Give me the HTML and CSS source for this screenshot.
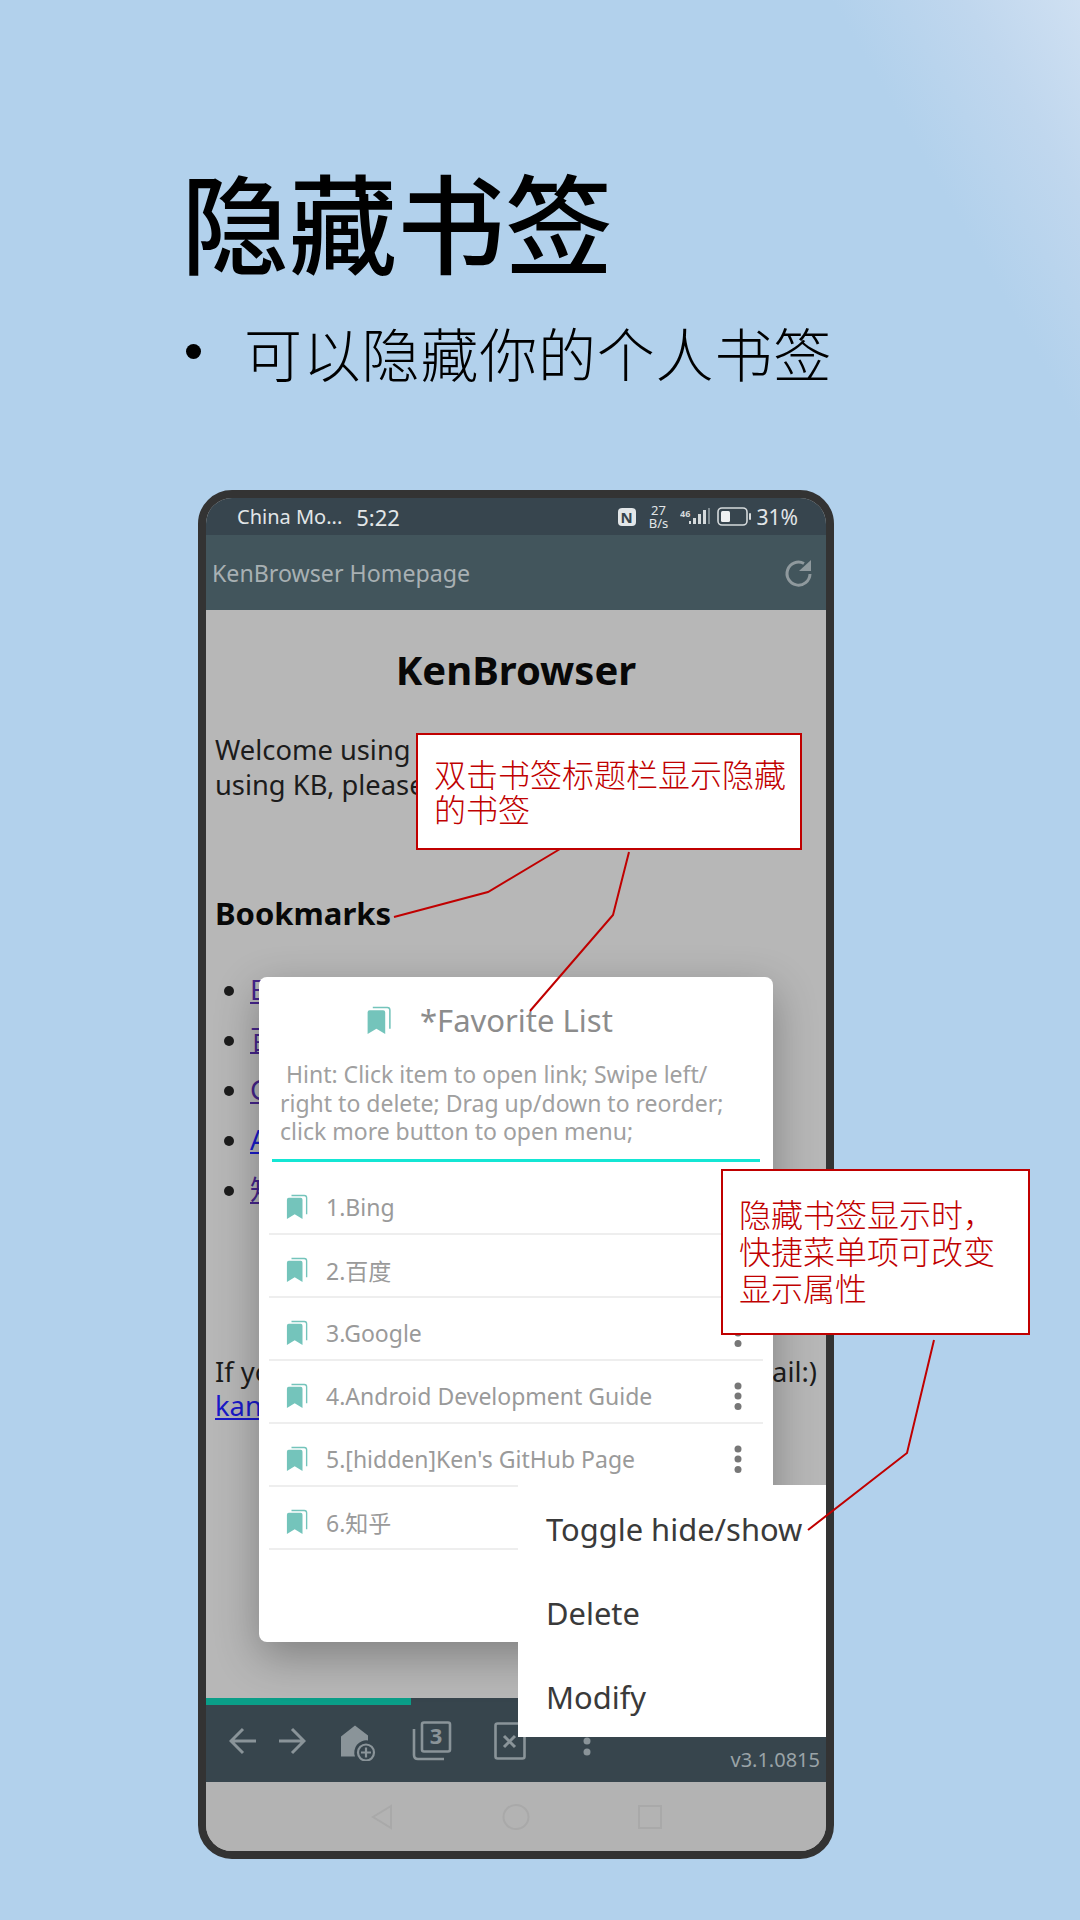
FILE: index.html
```html
<!DOCTYPE html>
<html lang="zh-CN">
<head>
    <meta charset="UTF-8">
    <meta name="viewport" content="width=device-width, initial-scale=1.0">
    <title>隐藏书签</title>
    <link rel="stylesheet" href="styles.css">
</head>
<body>
    <div class="slide">
        <header class="intro">
            <h1 class="intro-title">隐藏书签</h1>
            <ul class="intro-points">
                <li>可以隐藏你的个人书签</li>
            </ul>
        </header>

        <div class="phone">
            <div class="status-bar">
                <span class="carrier">China Mo...</span>
                <span class="clock">5:22</span>
                <div class="status-icons">
                    <span class="nfc">N</span>
                    <span class="speed">27<br>B/s</span>
                    <svg class="signal" width="30" height="20" viewBox="0 0 30 20">
                        <text x="0" y="10" class="signal-text">46</text>
                        <rect x="9" y="14" width="2" height="3" fill="#d5dadc"/>
                        <rect x="13" y="11" width="3" height="6" fill="#d5dadc"/>
                        <rect x="18" y="7" width="3" height="10" fill="#d5dadc"/>
                        <rect x="23" y="3" width="3" height="14" fill="#d5dadc"/>
                        <rect x="28" y="1" width="2" height="16" fill="#7e8a90"/>
                    </svg>
                    <svg class="battery" width="35" height="19" viewBox="0 0 35 19">
                        <rect x="1" y="1" width="29" height="17" rx="4" fill="none" stroke="#d5dadc" stroke-width="1.6"/>
                        <rect x="4" y="4" width="9" height="11" rx="1.5" fill="#eef0f1"/>
                        <rect x="32" y="6" width="2" height="7" rx="1" fill="#d5dadc"/>
                    </svg>
                    <span class="battery-text">31%</span>
                </div>
            </div>

            <div class="app-bar">
                <span class="app-title">KenBrowser Homepage</span>
                <svg width="30" height="30" viewBox="0 0 30 30">
                    <path d="M26 16 A11.5 11.5 0 1 1 20 5.5" fill="none" stroke="#8f999d" stroke-width="3"/>
                    <path d="M27 2 V13 H15 Z" fill="#8f999d"/>
                </svg>
            </div>

            <main class="web">
                <h2 class="web-title">KenBrowser</h2>
                <p class="web-welcome">Welcome using<br>using KB, please</p>
                <h3 class="web-heading">Bookmarks</h3>
                <ul class="web-links">
                    <li><a class="visited" href="#">B</a></li>
                    <li><a class="visited" href="#">百</a></li>
                    <li><a class="visited" href="#">G</a></li>
                    <li><a href="#">A</a></li>
                    <li><a class="visited" href="#">知</a></li>
                </ul>
                <p class="web-contact"><span>If yo</span><span>ail:)</span></p>
                <a class="web-mail" href="#">kan</a>
            </main>

            <div class="bottom-bar">
                <div class="progress"></div>
                <div class="tools">
                    <svg class="tool-back" width="28" height="28" viewBox="0 0 28 28">
                        <path d="M27 14 H2 M14 2 L2 14 L14 26" fill="none" stroke="#8a9499" stroke-width="3"/>
                    </svg>
                    <svg class="tool-forward" width="28" height="28" viewBox="0 0 28 28">
                        <path d="M1 14 H26 M14 2 L26 14 L14 26" fill="none" stroke="#8a9499" stroke-width="3"/>
                    </svg>
                    <svg class="tool-home" width="36" height="40" viewBox="0 -4.5 36 40">
                        <path d="M1 11 L15 0 L28 10 V15 A12 12 0 0 0 15 31 H1 Z" fill="#8a9499"/>
                        <circle cx="26" cy="27" r="8" fill="none" stroke="#8a9499" stroke-width="2.2"/>
                        <path d="M26 22 V32 M21 27 H31" stroke="#8a9499" stroke-width="2.2"/>
                    </svg>
                    <svg class="tool-tabs" width="40" height="40" viewBox="0 0 40 40">
                        <rect x="10" y="1.5" width="28" height="29" rx="2" fill="none" stroke="#8a9499" stroke-width="2.6"/>
                        <path d="M2 8 V34 Q2 38 6 38 H32" fill="none" stroke="#8a9499" stroke-width="2.6"/>
                        <text x="24" y="23" class="tool-count">3</text>
                    </svg>
                    <svg class="tool-close" width="32" height="38" viewBox="0 0 32 38">
                        <rect x="1.5" y="1.5" width="29" height="35" rx="2" fill="none" stroke="#8a9499" stroke-width="2.6"/>
                        <path d="M10 14 L21 25 M21 14 L10 25" stroke="#8a9499" stroke-width="3"/>
                    </svg>
                    <svg class="tool-more" width="12" height="32" viewBox="0 0 12 32">
                        <circle cx="6" cy="5" r="3.5" fill="#8a9499"/>
                        <circle cx="6" cy="16" r="3.5" fill="#8a9499"/>
                        <circle cx="6" cy="27" r="3.5" fill="#8a9499"/>
                    </svg>
                    <span class="version">v3.1.0815</span>
                </div>
            </div>

            <div class="nav-bar">
                <svg width="22" height="26" viewBox="0 0 22 26"><path d="M20 2 V24 L2 13 Z" fill="none" stroke="#a9a9a9" stroke-width="2"/></svg>
                <svg width="28" height="26" viewBox="0 0 28 26"><ellipse cx="14" cy="13" rx="12.5" ry="12" fill="none" stroke="#a9a9a9" stroke-width="2"/></svg>
                <svg width="24" height="24" viewBox="0 0 24 24"><rect x="1" y="1" width="22" height="22" fill="none" stroke="#a9a9a9" stroke-width="2"/></svg>
            </div>

            <section class="dialog">
                <div class="dialog-head">
                    <svg width="26" height="29" viewBox="0 0 24 28">
                        <path d="M1 6 Q1 4 3 4 H16 Q18 4 18 6 V27 L9.5 22 L1 27 Z" fill="#74c4bb"/>
                        <path d="M6 1.5 H20 Q22.5 1.5 22.5 4 V22" fill="none" stroke="#74c4bb" stroke-width="1.5"/>
                    </svg>
                    <span class="dialog-title">*Favorite List</span>
                </div>
                <p class="dialog-hint">&nbsp;Hint: Click item to open link; Swipe left/<br>right to delete; Drag up/down to reorder;<br>click more button to open menu;</p>
                <div class="dialog-rule"></div>
                <ul class="fav-list">
                    <li class="fav-item">
                        <svg width="22" height="26" viewBox="0 0 24 28"><path d="M1 6 Q1 4 3 4 H16 Q18 4 18 6 V27 L9.5 22 L1 27 Z" fill="#74c4bb"/><path d="M6 1.5 H20 Q22.5 1.5 22.5 4 V22" fill="none" stroke="#74c4bb" stroke-width="1.5"/></svg>
                        <span class="fav-name">1.Bing</span>
                    </li>
                    <li class="fav-item">
                        <svg width="22" height="26" viewBox="0 0 24 28"><path d="M1 6 Q1 4 3 4 H16 Q18 4 18 6 V27 L9.5 22 L1 27 Z" fill="#74c4bb"/><path d="M6 1.5 H20 Q22.5 1.5 22.5 4 V22" fill="none" stroke="#74c4bb" stroke-width="1.5"/></svg>
                        <span class="fav-name">2.百度</span>
                    </li>
                    <li class="fav-item">
                        <svg width="22" height="26" viewBox="0 0 24 28"><path d="M1 6 Q1 4 3 4 H16 Q18 4 18 6 V27 L9.5 22 L1 27 Z" fill="#74c4bb"/><path d="M6 1.5 H20 Q22.5 1.5 22.5 4 V22" fill="none" stroke="#74c4bb" stroke-width="1.5"/></svg>
                        <span class="fav-name">3.Google</span>
                        <svg class="fav-more" width="8" height="28" viewBox="0 0 8 28"><circle cx="4" cy="4" r="3.5"/><circle cx="4" cy="14" r="3.5"/><circle cx="4" cy="24.5" r="3.5"/></svg>
                    </li>
                    <li class="fav-item">
                        <svg width="22" height="26" viewBox="0 0 24 28"><path d="M1 6 Q1 4 3 4 H16 Q18 4 18 6 V27 L9.5 22 L1 27 Z" fill="#74c4bb"/><path d="M6 1.5 H20 Q22.5 1.5 22.5 4 V22" fill="none" stroke="#74c4bb" stroke-width="1.5"/></svg>
                        <span class="fav-name">4.Android Development Guide</span>
                        <svg class="fav-more" width="8" height="28" viewBox="0 0 8 28"><circle cx="4" cy="4" r="3.5"/><circle cx="4" cy="14" r="3.5"/><circle cx="4" cy="24.5" r="3.5"/></svg>
                    </li>
                    <li class="fav-item">
                        <svg width="22" height="26" viewBox="0 0 24 28"><path d="M1 6 Q1 4 3 4 H16 Q18 4 18 6 V27 L9.5 22 L1 27 Z" fill="#74c4bb"/><path d="M6 1.5 H20 Q22.5 1.5 22.5 4 V22" fill="none" stroke="#74c4bb" stroke-width="1.5"/></svg>
                        <span class="fav-name">5.[hidden]Ken's GitHub Page</span>
                        <svg class="fav-more" width="8" height="28" viewBox="0 0 8 28"><circle cx="4" cy="4" r="3.5"/><circle cx="4" cy="14" r="3.5"/><circle cx="4" cy="24.5" r="3.5"/></svg>
                    </li>
                    <li class="fav-item">
                        <svg width="22" height="26" viewBox="0 0 24 28"><path d="M1 6 Q1 4 3 4 H16 Q18 4 18 6 V27 L9.5 22 L1 27 Z" fill="#74c4bb"/><path d="M6 1.5 H20 Q22.5 1.5 22.5 4 V22" fill="none" stroke="#74c4bb" stroke-width="1.5"/></svg>
                        <span class="fav-name">6.知乎</span>
                    </li>
                </ul>
            </section>

            <div class="menu">
                <div class="menu-item">Toggle hide/show</div>
                <div class="menu-item">Delete</div>
                <div class="menu-item">Modify</div>
            </div>
        </div>

        <svg class="leaders" width="1080" height="1920" viewBox="0 0 1080 1920">
            <polyline points="394,917 488,892 560,849"/>
            <polyline points="629,852 613,915 530,1011"/>
            <polyline points="934,1340 907,1453 808,1530"/>
        </svg>

        <div class="note note-top">双击书签标题栏显示隐藏的书签</div>
        <div class="note note-side">隐藏书签显示时，快捷菜单项可改变显示属性</div>
    </div>
</body>
</html>
```

FILE: styles.css
```css
* {
    box-sizing: border-box;
}

body {
    margin: 0;
    font-family: "Noto Sans", "Noto Sans CJK SC", sans-serif;
}

.slide {
    position: relative;
    width: 1080px;
    height: 1920px;
    overflow: hidden;
    padding: 154px 0 0 181px;
    background: linear-gradient(240deg, #cfe0f2 0, #c0d7ee 100px, #b2d1ec 215px);
}

/* heading above the phone */
.intro-title {
    margin: 0;
    font-family: "Noto Sans CJK SC", sans-serif;
    font-size: 108px;
    font-weight: 500;
    line-height: 130px;
    color: #000;
}

.intro-points {
    margin: 0;
    padding: 0;
    list-style: none;
}

.intro-points li {
    position: relative;
    margin-top: 30px;
    padding-left: 63px;
    font-family: "Noto Sans CJK SC", sans-serif;
    font-size: 58px;
    font-weight: 300;
    letter-spacing: 0.8px;
    line-height: 76px;
    color: #000;
}

.intro-points li::before {
    content: "";
    position: absolute;
    left: 5px;
    top: 30px;
    width: 15px;
    height: 15px;
    border-radius: 50%;
    background: #000;
}

/* phone */
.phone {
    position: relative;
    display: flex;
    flex-direction: column;
    width: 636px;
    height: 1369px;
    margin: 100px 0 0 17px;
    border: 8px solid #333;
    border-radius: 34px;
    overflow: hidden;
    background: #b7b7b7;
}

.status-bar {
    display: flex;
    align-items: center;
    height: 37px;
    padding: 0 28px 0 31px;
    background: #37454e;
    color: #e2e6e8;
}

.carrier {
    font-size: 20px;
}

.clock {
    margin-left: 14px;
    font-size: 22px;
}

.status-icons {
    display: flex;
    align-items: center;
    margin-left: auto;
}

.nfc {
    width: 18px;
    height: 18px;
    border-radius: 4px;
    background: #e2e6e8;
    color: #37454e;
    font-size: 15px;
    font-weight: 700;
    line-height: 18px;
    text-align: center;
}

.speed {
    width: 24px;
    margin-left: 11px;
    font-size: 13px;
    line-height: 13px;
    text-align: center;
}

.signal {
    margin-left: 9px;
}

.signal-text {
    font-size: 9px;
    font-weight: 700;
    fill: #d5dadc;
}

.battery {
    margin-left: 7px;
}

.battery-text {
    margin-left: 5px;
    font-size: 21px;
}

.app-bar {
    display: flex;
    align-items: center;
    justify-content: space-between;
    height: 75px;
    padding: 0 12px 0 6px;
    background: #42555c;
}

.app-title {
    font-size: 23.2px;
    color: #a8b0b3;
}

/* page shown in the browser */
.web {
    flex: 1;
    padding: 0 9px;
    color: #1c1c1c;
    font-size: 27.3px;
    line-height: 34px;
}

.web-title {
    margin: 38px 0 0;
    font-size: 40px;
    font-weight: 700;
    line-height: 44px;
    text-align: center;
    color: #080808;
}

.web-welcome {
    margin: 40px 0 0;
    line-height: 35px;
    white-space: nowrap;
}

.web-heading {
    margin: 94px 0 0;
    font-size: 31px;
    font-weight: 700;
    line-height: 34px;
    color: #080808;
}

.web-links {
    margin: 43px 0 0;
    padding-left: 35px;
}

.web-links li + li {
    margin-top: 16px;
}

.web-links a,
.web-mail {
    color: #1a1ac8;
}

.web-links a.visited {
    color: #45248a;
}

.web-contact {
    display: flex;
    justify-content: space-between;
    margin: 148px 0 0;
}

.bottom-bar {
    height: 84px;
    background: #37454d;
}

.progress {
    width: 205px;
    height: 7px;
    background: #0a9e88;
}

.tools {
    display: flex;
    align-items: center;
    height: 77px;
    padding: 0 6px 6px 23px;
}

.tool-forward {
    margin-left: 21px;
}

.tool-home {
    margin-left: 34px;
}

.tool-tabs {
    margin-left: 36px;
}

.tool-close {
    margin-left: 42px;
}

.tool-more {
    margin-left: 55px;
}

.tool-count {
    font-size: 22px;
    font-weight: 700;
    text-anchor: middle;
    fill: #8a9499;
}

.version {
    align-self: flex-end;
    margin-left: auto;
    margin-bottom: 2px;
    font-size: 20px;
    line-height: 28px;
    color: #9aa3a7;
}

.nav-bar {
    display: flex;
    align-items: center;
    justify-content: space-between;
    height: 69px;
    padding: 0 164px 0 165px;
    background: #b3b3b3;
}

/* favorites dialog */
.dialog {
    position: absolute;
    left: 53px;
    top: 479px;
    width: 514px;
    height: 665px;
    padding: 28px 10px 0;
    border-radius: 8px;
    background: #fff;
    box-shadow: 0 14px 44px rgba(0, 0, 0, 0.3);
}

.dialog-head {
    display: flex;
    align-items: center;
    height: 30px;
    padding-left: 97px;
}

.dialog-title {
    margin-left: 28px;
    font-size: 31px;
    color: #8c8c8c;
}

.dialog-hint {
    margin: 25px 0 0 11px;
    font-size: 23px;
    line-height: 28.5px;
    color: #a0a0a0;
    white-space: nowrap;
}

.dialog-rule {
    height: 3px;
    margin: 13px 3px 0;
    background: #14e6d4;
}

.fav-list {
    margin: 10px 0 0;
    padding: 0;
    list-style: none;
}

.fav-item {
    display: flex;
    align-items: center;
    height: 63px;
    padding: 10px 21px 0 17px;
    border-bottom: 2px solid #eee;
}

.fav-name {
    margin-left: 18px;
    font-size: 23px;
    color: #9a9a9a;
}

.fav-more {
    margin-left: auto;
    fill: #777;
}

.menu {
    position: absolute;
    left: 312px;
    top: 987px;
    width: 320px;
    height: 252px;
    background: #fff;
}

.menu-item {
    display: flex;
    align-items: center;
    height: 84px;
    padding: 3px 0 0 28px;
    font-size: 30.9px;
    color: #3a3a3a;
}

/* red annotations over the screenshot */
.leaders {
    position: absolute;
    left: 0;
    top: 0;
}

.leaders polyline {
    fill: none;
    stroke: #c00000;
    stroke-width: 2;
}

.note {
    position: absolute;
    padding: 0 10px 0 16px;
    border: 2px solid #c00000;
    background: #fff;
    font-family: "Noto Sans CJK SC", sans-serif;
    font-size: 32px;
    font-weight: 300;
    color: #c00000;
}

.note-top {
    left: 416px;
    top: 733px;
    width: 386px;
    height: 117px;
    padding-top: 21px;
    line-height: 35px;
}

.note-side {
    left: 721px;
    top: 1169px;
    width: 309px;
    height: 166px;
    padding-top: 24px;
    line-height: 37px;
}
```
